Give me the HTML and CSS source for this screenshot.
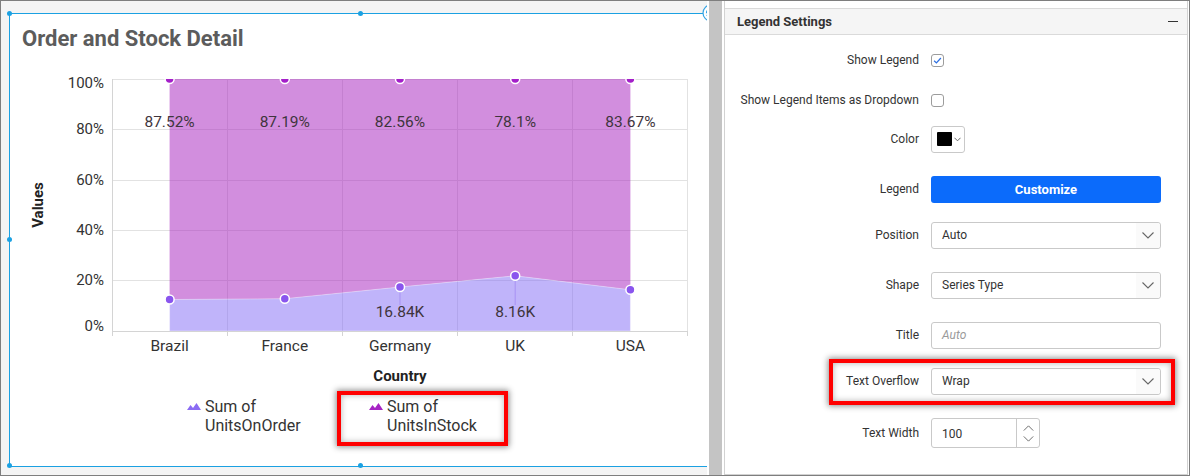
FILE: index.html
```html
<!DOCTYPE html>
<html>
<head>
<meta charset="utf-8">
<link rel="stylesheet" href="styles.css">
</head>
<body>
<div class="frame">
  <div class="canvas">
    <div class="widget">
      <div class="chart-title">Order and Stock Detail</div>
      <svg class="chart" viewBox="10 52 696 338" width="696" height="338">
        <defs><clipPath id="plotclip"><rect x="112" y="79" width="576" height="252"/></clipPath></defs>
        <g class="grid">
          <line x1="112" y1="79.5" x2="688" y2="79.5"/>
          <line x1="112" y1="129.5" x2="688" y2="129.5"/>
          <line x1="112" y1="180.5" x2="688" y2="180.5"/>
          <line x1="112" y1="230.5" x2="688" y2="230.5"/>
          <line x1="112" y1="280.5" x2="688" y2="280.5"/>
          <line x1="227.5" y1="79" x2="227.5" y2="331"/>
          <line x1="342.5" y1="79" x2="342.5" y2="331"/>
          <line x1="457.5" y1="79" x2="457.5" y2="331"/>
          <line x1="572.5" y1="79" x2="572.5" y2="331"/>
          <line x1="687.5" y1="79" x2="687.5" y2="331"/>
        </g>
        <polygon class="area-stock" points="169.6,79 284.8,79 400,79 515.2,79 630.4,79 630.4,289.8 515.2,275.8 400,287 284.8,298.7 169.6,299.5"/>
        <polygon class="area-order" points="169.6,299.5 284.8,298.7 400,287 515.2,275.8 630.4,289.8 630.4,331 169.6,331"/>
        <line class="axis" x1="112.5" y1="79" x2="112.5" y2="331"/>
        <line class="axis" x1="112" y1="331.5" x2="688" y2="331.5"/>
        <g class="ticks">
          <line x1="112.5" y1="331" x2="112.5" y2="336"/>
          <line x1="227.5" y1="331" x2="227.5" y2="336"/>
          <line x1="342.5" y1="331" x2="342.5" y2="336"/>
          <line x1="457.5" y1="331" x2="457.5" y2="336"/>
          <line x1="572.5" y1="331" x2="572.5" y2="336"/>
          <line x1="687.5" y1="331" x2="687.5" y2="336"/>
        </g>
        <g class="connectors">
          <line x1="400" y1="291" x2="400" y2="305"/>
          <line x1="515.2" y1="280" x2="515.2" y2="305"/>
        </g>
        <g clip-path="url(#plotclip)" class="mk-stock">
          <circle cx="169.6" cy="79" r="4.5"/>
          <circle cx="284.8" cy="79" r="4.5"/>
          <circle cx="400" cy="79" r="4.5"/>
          <circle cx="515.2" cy="79" r="4.5"/>
          <circle cx="630.4" cy="79" r="4.5"/>
        </g>
        <g class="mk-order">
          <circle cx="169.6" cy="299.5" r="4.5"/>
          <circle cx="284.8" cy="298.7" r="4.5"/>
          <circle cx="400" cy="287" r="4.5"/>
          <circle cx="515.2" cy="275.8" r="4.5"/>
          <circle cx="630.4" cy="289.8" r="4.5"/>
        </g>
        <g class="data-label">
          <text x="169.6" y="122">87.52%</text>
          <text x="284.8" y="122">87.19%</text>
          <text x="400" y="122">82.56%</text>
          <text x="515.2" y="122">78.1%</text>
          <text x="630.4" y="122">83.67%</text>
          <text x="400" y="312">16.84K</text>
          <text x="515.2" y="312">8.16K</text>
        </g>
        <g class="y-label">
          <text x="104" y="83">100%</text>
          <text x="104" y="129">80%</text>
          <text x="104" y="180">60%</text>
          <text x="104" y="230">40%</text>
          <text x="104" y="280">20%</text>
          <text x="104" y="326">0%</text>
        </g>
        <g class="x-label">
          <text x="169.6" y="346">Brazil</text>
          <text x="284.8" y="346">France</text>
          <text x="400" y="346">Germany</text>
          <text x="515.2" y="346">UK</text>
          <text x="630.4" y="346">USA</text>
        </g>
        <text class="axis-title" x="38" y="205" transform="rotate(-90 38 205)">Values</text>
        <text class="axis-title" x="400" y="376">Country</text>
      </svg>
      <div class="legend">
        <div class="legend-item">
          <svg class="legend-icon order" viewBox="0 0 14 7" width="14" height="7"><path d="M0 7 L3.5 2 L6 5 L9.5 0 L14 7 Z"/></svg>
          <span class="legend-text">Sum of UnitsOnOrder</span>
        </div>
        <div class="legend-item">
          <svg class="legend-icon stock" viewBox="0 0 14 7" width="14" height="7"><path d="M0 7 L3.5 2 L6 5 L9.5 0 L14 7 Z"/></svg>
          <span class="legend-text">Sum of UnitsInStock</span>
          <span class="hl-box legend-hl"></span>
        </div>
      </div>
      <span class="handle h-tl"></span>
      <span class="handle h-tc"></span>
      <span class="handle h-ml"></span>
      <span class="handle h-bl"></span>
      <span class="handle h-bc"></span>
    </div>
    <svg class="corner-icon" viewBox="0 0 18 18" width="18" height="18">
      <circle cx="9" cy="9" r="8" fill="#fff" stroke="#35a3e3" stroke-width="1.2"/>
      <circle cx="9" cy="9" r="4.5" fill="none" stroke="#35a3e3" stroke-width="1.2" stroke-dasharray="3 1.5"/>
    </svg>
  </div>
  <div class="splitter"></div>
  <div class="panel">
    <div class="panel-head">
      <span>Legend Settings</span>
      <span class="collapse"></span>
    </div>
    <div class="panel-body">
      <div class="row first">
        <span class="lbl">Show Legend</span>
        <span class="checkbox"><svg viewBox="0 0 13 13" width="11" height="11"><path d="M2.5 6.8 L5.2 9.3 L10.5 3.5" fill="none" stroke="#2d6fe0" stroke-width="1.5"/></svg></span>
      </div>
      <div class="row m12">
        <span class="lbl">Show Legend Items as Dropdown</span>
        <span class="checkbox"></span>
      </div>
      <div class="row m11">
        <span class="lbl">Color</span>
        <span class="color-pick"><span class="swatch"></span><svg viewBox="0 0 8 5" width="7" height="5"><path d="M0.5 0.5 L4 4 L7.5 0.5" fill="none" stroke="#555" stroke-width="1"/></svg></span>
      </div>
      <div class="row">
        <span class="lbl">Legend</span>
        <span class="btn">Customize</span>
      </div>
      <div class="row m18">
        <span class="lbl">Position</span>
        <span class="dropdown"><span class="dd-text">Auto</span><span class="dd-arrow"><svg viewBox="0 0 12 7" width="12" height="7"><path d="M0.5 0.5 L6 6 L11.5 0.5" fill="none" stroke="#666" stroke-width="1.1"/></svg></span></span>
      </div>
      <div class="row">
        <span class="lbl">Shape</span>
        <span class="dropdown"><span class="dd-text">Series Type</span><span class="dd-arrow"><svg viewBox="0 0 12 7" width="12" height="7"><path d="M0.5 0.5 L6 6 L11.5 0.5" fill="none" stroke="#666" stroke-width="1.1"/></svg></span></span>
      </div>
      <div class="row">
        <span class="lbl">Title</span>
        <span class="text-input"><span class="placeholder">Auto</span></span>
      </div>
      <div class="row m18 highlight">
        <span class="lbl">Text Overflow</span>
        <span class="dropdown"><span class="dd-text">Wrap</span><span class="dd-arrow"><svg viewBox="0 0 12 7" width="12" height="7"><path d="M0.5 0.5 L6 6 L11.5 0.5" fill="none" stroke="#666" stroke-width="1.1"/></svg></span></span>
        <span class="hl-box overflow-hl"></span>
      </div>
      <div class="row m23 tall">
        <span class="lbl">Text Width</span>
        <span class="spin">
          <span class="spin-value">100</span>
          <span class="spin-btns">
            <svg viewBox="0 0 12 7" width="11" height="6"><path d="M0.5 6.5 L6 1 L11.5 6.5" fill="none" stroke="#666" stroke-width="1.1"/></svg>
            <svg viewBox="0 0 12 7" width="11" height="6"><path d="M0.5 0.5 L6 6 L11.5 0.5" fill="none" stroke="#666" stroke-width="1.1"/></svg>
          </span>
        </span>
      </div>
    </div>
  </div>
</div>
</body>
</html>
```

FILE: styles.css
```css
* { box-sizing: border-box; }
html, body { margin: 0; padding: 0; }
body { font-family: Roboto, "Liberation Sans", sans-serif; color: #333; }

.frame {
  width: 1190px;
  height: 476px;
  border: 1px solid #7e7e7e;
  background: #fff;
  display: flex;
  overflow: hidden;
}

/* ---------- designer canvas ---------- */
.canvas {
  flex: none;
  width: 706px;
  height: 100%;
  background: #f4f4f4;
  position: relative;
  overflow: hidden;
  padding: 12px 0 0 8px;
}
.widget {
  width: 710px;
  height: 454px;
  border: 1px solid #1ba1e2;
  background: #fff;
  position: relative;
  display: flex;
  flex-direction: column;
}
.chart-title {
  font: 700 22px/26px Roboto, sans-serif;
  color: #5c5c5c;
  padding: 12px 0 0 12px;
}
.chart { display: block; flex: none; }

.grid line { stroke: #e2e2e2; stroke-width: 1; }
.axis { stroke: #d4d4d4; stroke-width: 1; }
.ticks line { stroke: #d4d4d4; stroke-width: 1; }
.area-stock { fill: rgb(165, 30, 190); fill-opacity: 0.5; }
.area-order { fill: rgb(130, 105, 245); fill-opacity: 0.5; stroke: #fff; stroke-opacity: 0.35; stroke-width: 1; }
.connectors line { stroke: #a792f3; stroke-width: 1; }
.mk-stock circle { fill: #a41fc9; stroke: #fff; stroke-width: 1.5; }
.mk-order circle { fill: #8a55ee; stroke: #fff; stroke-width: 1.5; }

.data-label text {
  font: 15.5px Roboto, sans-serif;
  fill: #3f353d;
  text-anchor: middle;
  dominant-baseline: central;
}
.y-label text {
  font: 15px Roboto, sans-serif;
  fill: #333;
  text-anchor: end;
  dominant-baseline: central;
}
.x-label text {
  font: 15.5px Roboto, sans-serif;
  fill: #333;
  text-anchor: middle;
  dominant-baseline: central;
}
.axis-title {
  font: 700 15px Roboto, sans-serif;
  fill: #222;
  text-anchor: middle;
  dominant-baseline: central;
}

.legend {
  display: flex;
  margin-top: 7px;
  padding-left: 177px;
}
.legend-item {
  width: 182px;
  display: flex;
  align-items: flex-start;
  gap: 4px;
  position: relative;
}
.legend-icon { flex: none; margin-top: 6px; }
.legend-icon.order path { fill: #8b6cf3; }
.legend-icon.stock path { fill: #a624c4; }
.legend-text {
  max-width: 100px;
  font: 16px/19px Roboto, sans-serif;
  color: #333;
}

.hl-box {
  position: absolute;
  border: 4px solid #ff0000;
  box-shadow: 0 0 6px 1px rgba(0, 0, 0, 0.45), inset 0 0 6px rgba(0, 0, 0, 0.3);
  pointer-events: none;
}
.legend-hl { left: -32px; top: -6px; width: 171px; height: 55px; }

.handle {
  position: absolute;
  width: 5px;
  height: 5px;
  border-radius: 50%;
  background: #1ba1e2;
}
.h-tl { left: -3px; top: -3px; }
.h-tc { left: 348px; top: -3px; }
.h-ml { left: -3px; top: 223px; }
.h-bl { left: -3px; top: 449px; }
.h-bc { left: 348px; top: 449px; }

.corner-icon { position: absolute; left: 701px; top: 3px; }

/* ---------- splitter ---------- */
.splitter {
  flex: none;
  width: 13px;
  margin-left: 2px;
  background: #c4c4c4;
}

/* ---------- property panel ---------- */
.panel {
  flex: none;
  width: 464px;
  margin-left: 2px;
  border-left: 1px solid #d2d2d2;
  border-right: 1px solid #d2d2d2;
  border-bottom: 1px solid #d2d2d2;
  padding-top: 7px;
}
.panel-head {
  height: 27px;
  border-top: 1px solid #dadada;
  border-bottom: 1px solid #dadada;
  background: #f5f5f5;
  display: flex;
  align-items: center;
  justify-content: space-between;
  padding: 0 9px 0 12px;
  font: 700 13px Roboto, sans-serif;
  color: #333;
}
.collapse {
  width: 10px;
  height: 1.5px;
  background: #333;
}
.panel-body { padding-top: 11px; }

.row {
  display: flex;
  align-items: center;
  height: 28px;
  margin-top: 22px;
  position: relative;
}
.row.first { margin-top: 0; }
.row.m11 { margin-top: 11px; }
.row.m12 { margin-top: 12px; }
.row.m18 { margin-top: 18px; }
.row.m23 { margin-top: 23px; }
.row.tall { height: 30px; }

.lbl {
  width: 194px;
  flex: none;
  text-align: right;
  font: 12px Roboto, sans-serif;
  color: #333;
  margin-right: 12px;
}
.checkbox {
  width: 13px;
  height: 13px;
  border: 1px solid #9c9c9c;
  border-radius: 3px;
  display: flex;
  align-items: center;
  justify-content: center;
  background: #fff;
}
.color-pick {
  width: 34px;
  height: 27px;
  border: 1px solid #c9c9c9;
  border-radius: 3px;
  display: flex;
  align-items: center;
  padding-left: 5px;
  gap: 2px;
}
.swatch {
  width: 15px;
  height: 14px;
  background: #000;
  border-radius: 1px;
}
.btn {
  width: 230px;
  height: 27px;
  background: #0b6bfb;
  border-radius: 3px;
  color: #fff;
  font: 700 13px Roboto, sans-serif;
  display: flex;
  align-items: center;
  justify-content: center;
}
.dropdown, .text-input {
  width: 230px;
  height: 27px;
  border: 1px solid #c9c9c9;
  border-radius: 3px;
  display: flex;
  align-items: center;
  justify-content: space-between;
  padding-left: 10px;
  font: 12px Roboto, sans-serif;
  color: #333;
  background: #fff;
}
.dd-arrow {
  width: 24px;
  height: 100%;
  display: flex;
  align-items: center;
  justify-content: center;
  background: #fafafa;
  border-radius: 0 3px 3px 0;
}
.placeholder { color: #9a9a9a; font-style: italic; }
.overflow-hl { left: 104px; top: -8px; width: 346px; height: 46px; }

.spin {
  width: 109px;
  height: 30px;
  border: 1px solid #c9c9c9;
  border-radius: 3px;
  display: flex;
  font: 12px Roboto, sans-serif;
  color: #333;
}
.spin-value {
  flex: 1;
  display: flex;
  align-items: center;
  padding-left: 10px;
  padding-top: 2px;
}
.spin-btns {
  width: 23px;
  border-left: 1px solid #c9c9c9;
  display: flex;
  flex-direction: column;
  align-items: center;
  justify-content: center;
  gap: 5px;
}
```
